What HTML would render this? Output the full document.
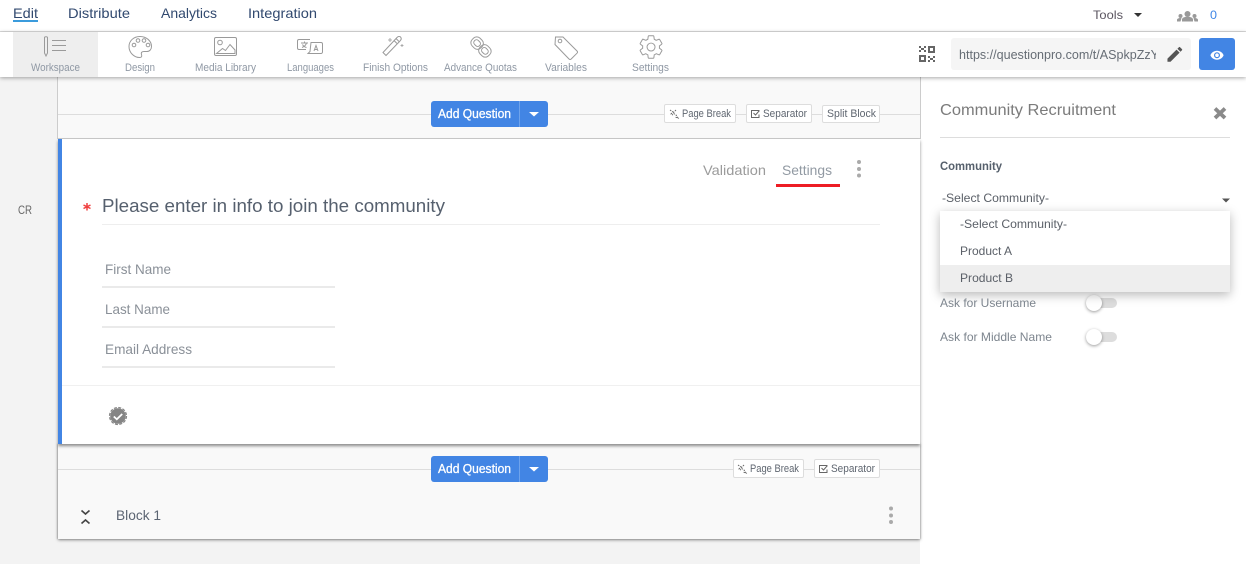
<!DOCTYPE html>
<html><head><meta charset="utf-8"><title>Community Recruitment</title>
<style>
html,body{margin:0;padding:0;width:1246px;height:564px;overflow:hidden;background:#f3f3f3;font-family:"Liberation Sans",sans-serif}
.a{position:absolute;box-sizing:border-box}
svg.o{position:absolute;left:0;top:0;z-index:50}
svg text{font-family:"Liberation Sans",sans-serif}
.chip{background:#fff;border:1px solid #ddd;border-radius:2px}
.btn{background:#4285e4;border-radius:3px}
</style></head><body>
<!-- header -->
<div class="a" style="left:0;top:0;width:1246px;height:32px;background:#fff;border-bottom:1px solid #dcdcdc"></div>
<div class="a" style="left:13px;top:20px;width:25px;height:2px;background:#3b9bdc;z-index:60"></div>
<!-- right panel -->
<div class="a" style="left:920px;top:77px;width:326px;height:487px;background:#fff"></div>
<!-- top block -->
<div class="a" style="left:57px;top:77px;width:864px;height:62px;background:#f9f9f9;border-left:1px solid #ccc;border-right:1px solid #ccc;border-bottom:1px solid #ccc"></div>
<div class="a" style="left:58px;top:114px;width:862px;height:1px;background:#ddd"></div>
<div class="a btn" style="left:431px;top:101px;width:117px;height:26px"></div>
<div class="a" style="left:519px;top:101px;width:1px;height:26px;background:#6ea3ec"></div>
<div class="a chip" style="left:664px;top:104px;width:72px;height:19px"></div>
<div class="a" style="left:736px;top:114px;width:10px;height:1px;background:#ddd"></div>
<div class="a chip" style="left:746px;top:104px;width:66px;height:19px"></div>
<div class="a chip" style="left:822px;top:105px;width:58px;height:18px"></div>
<!-- bottom block -->
<div class="a" style="left:58px;top:444px;width:862px;height:95px;background:#f9f9f9;box-shadow:0 1px 3px rgba(0,0,0,.45),1px 0 1px rgba(0,0,0,.12),-1px 0 1px rgba(0,0,0,.15)"></div>
<div class="a" style="left:58px;top:469px;width:862px;height:1px;background:#ddd"></div>
<div class="a btn" style="left:431px;top:456px;width:117px;height:26px"></div>
<div class="a" style="left:519px;top:456px;width:1px;height:26px;background:#6ea3ec"></div>
<div class="a chip" style="left:733px;top:459px;width:71px;height:19px"></div>
<div class="a chip" style="left:814px;top:459px;width:66px;height:19px"></div>
<!-- question card -->
<div class="a" style="left:58px;top:139px;width:862px;height:305px;background:#fff;border-left:4px solid #4285e4;box-shadow:0 2px 3px rgba(0,0,0,.45)"></div>
<div class="a" style="left:102px;top:224px;width:778px;height:1px;background:#eee"></div>
<div class="a" style="left:102px;top:286px;width:233px;height:2px;background:#eaeaea"></div>
<div class="a" style="left:102px;top:326px;width:233px;height:2px;background:#eaeaea"></div>
<div class="a" style="left:102px;top:366px;width:233px;height:2px;background:#eaeaea"></div>
<div class="a" style="left:62px;top:385px;width:858px;height:1px;background:#f0f0f0"></div>
<div class="a" style="left:776px;top:184px;width:64px;height:3px;background:#ed1c24"></div>
<!-- toolbar -->
<div class="a" style="left:0;top:32px;width:1246px;height:45px;background:#fff;box-shadow:0 1px 4px rgba(0,0,0,.35);z-index:5"></div>
<div class="a" style="left:13px;top:32px;width:85px;height:45px;background:#eee;z-index:6"></div>
<div class="a" style="left:951px;top:38px;width:240px;height:32px;background:#f5f5f5;border-radius:3px;z-index:6"></div>
<div class="a btn" style="left:1199px;top:38px;width:36px;height:32px;z-index:6"></div>
<!-- right section -->
<div class="a" style="left:940px;top:137px;width:290px;height:1px;background:#ddd"></div>
<div class="a" style="left:1086px;top:298px;width:31px;height:10px;background:#ddd;border-radius:5px"></div>
<div class="a" style="left:1086px;top:295px;width:16px;height:16px;background:#fff;border-radius:50%;box-shadow:0 1px 3px rgba(0,0,0,.4)"></div>
<div class="a" style="left:1086px;top:332px;width:31px;height:10px;background:#ddd;border-radius:5px"></div>
<div class="a" style="left:1086px;top:329px;width:16px;height:16px;background:#fff;border-radius:50%;box-shadow:0 1px 3px rgba(0,0,0,.4)"></div>
<div class="a" style="left:940px;top:211px;width:290px;height:81px;background:#fff;box-shadow:0 3px 10px rgba(0,0,0,.28);z-index:10"></div>
<div class="a" style="left:940px;top:265px;width:290px;height:27px;background:#eee;z-index:11"></div>

<svg class="o" width="1246" height="564" viewBox="0 0 1246 564" xmlns="http://www.w3.org/2000/svg">
<g font-size="14" fill="#31496f">
<text x="13" y="18" textLength="25" lengthAdjust="spacingAndGlyphs">Edit</text>
<text x="68" y="18" textLength="62" lengthAdjust="spacingAndGlyphs">Distribute</text>
<text x="161" y="18" textLength="56" lengthAdjust="spacingAndGlyphs">Analytics</text>
<text x="248" y="18" textLength="69" lengthAdjust="spacingAndGlyphs">Integration</text>
</g>
<text x="1093" y="19" font-size="12" fill="#5b5560" textLength="30" lengthAdjust="spacingAndGlyphs">Tools</text>
<path d="M1134 13h8l-4 4z" fill="#333"/>
<g fill="#999"><circle cx="1187.500" cy="14" r="3"/><circle cx="1180.500" cy="16" r="2"/><circle cx="1194.500" cy="16" r="2"/><path d="M1182 21.500v-2c0-2 3-2.800 5.500-2.800s5.500.8 5.500 2.800v2z"/><path d="M1177 21.500v-1.500c0-1.500 1.800-2 3.500-2l1 .3-1 3.200zM1198 21.500v-1.500c0-1.500-1.800-2-3.500-2l-1 .3 1 3.200z"/></g>
<text x="1210" y="19" font-size="12" fill="#3f86e6" textLength="7" lengthAdjust="spacingAndGlyphs">0</text>

<!-- toolbar labels -->
<g font-size="11" fill="#8f98a4">
<text x="31" y="71" textLength="49" lengthAdjust="spacingAndGlyphs">Workspace</text>
<text x="125" y="71" textLength="30" lengthAdjust="spacingAndGlyphs">Design</text>
<text x="195" y="71" textLength="61" lengthAdjust="spacingAndGlyphs">Media Library</text>
<text x="287" y="71" textLength="47" lengthAdjust="spacingAndGlyphs">Languages</text>
<text x="363" y="71" textLength="65" lengthAdjust="spacingAndGlyphs">Finish Options</text>
<text x="444" y="71" textLength="73" lengthAdjust="spacingAndGlyphs">Advance Quotas</text>
<text x="545" y="71" textLength="42" lengthAdjust="spacingAndGlyphs">Variables</text>
<text x="632" y="71" textLength="37" lengthAdjust="spacingAndGlyphs">Settings</text>
</g>
<!-- toolbar icons -->
<g fill="none" stroke="#9a9a9a" stroke-width="1">
<path d="M44.500 37.500c0-1 3-1 3 0V53l-1.500 3-1.500-3z"/><path d="M52 40.500h14M52 45.500h14M52 50.500h14"/>
<path d="M140 36.500c-6.500 0-11 4.500-11 10 0 6 5 11 10.500 11 2.500 0 2.500-1.500 2-3-.7-2 .5-3 2.500-3h3c2.500 0 4.500-2 4.500-5 0-5.500-5-10-11.500-10z"/>
<circle cx="134" cy="45" r="1.800"/><circle cx="138" cy="40.500" r="1.800"/><circle cx="144" cy="40.500" r="1.800"/><circle cx="148" cy="45" r="1.800"/>
<rect x="214.500" y="37.500" width="22" height="18" rx="1.500"/><circle cx="220" cy="42.500" r="2.300"/><path d="M216.500 53.500l6-5 3 2 4.500-6 5 5.500v3.500z"/>
<path d="M310 39.500h-11c-.8 0-1.500.6-1.500 1.500v7c0 .8.600 1.500 1.500 1.500h7"/><path d="M311 42.500h10c.8 0 1.500.6 1.500 1.500v8c0 .8-.7 1.500-1.500 1.500h-13l2-2z" fill="#fff"/><path d="M301 43h7M304.500 41.500v1.500M306.500 43c-.5 2-2 3.500-4.500 4.500M302.500 44.500c.5 1 2 2.500 4 3M314 51l2-5.500 2 5.500M314.800 49.500h2.500"/>
<path d="M386 55.500l-3-3 14-15c1-1 2.500-1.500 3.500-.5s1 2.500-.5 4z"/><path d="M394 40.500l3 3M396 38.500l3 3"/><path d="M390 38v4M388 40h4M402 44v3M400.500 45.500h3" stroke-width=".8"/>
<g transform="rotate(45 481 47)"><rect x="469.500" y="41.500" width="12" height="11" rx="4.500"/><rect x="480.500" y="41.500" width="12" height="11" rx="4.500"/><rect x="472" y="44.300" width="7" height="5.400" rx="2.500"/><rect x="483" y="44.300" width="7" height="5.400" rx="2.500"/></g>
<path d="M555.500 37h7.500l14 14c.7.700.7 1.500 0 2.200l-5.800 5.800c-.7.600-1.500.6-2.200 0l-14-14.500z"/><circle cx="560" cy="41" r="1.800"/>
<g transform="translate(637 33) scale(1.170)"><path d="M19.140,12.940c0.040-0.300,0.060-0.610,0.060-0.940c0-0.320-0.020-0.640-0.070-0.940l2.030-1.580c0.180-0.140,0.230-0.410,0.120-0.610l-1.920-3.320c-0.120-0.220-0.370-0.290-0.590-0.220l-2.390,0.960c-0.500-0.380-1.030-0.700-1.620-0.940L14.400,2.810c-0.040-0.240-0.240-0.410-0.480-0.410h-3.840c-0.240,0-0.430,0.170-0.470,0.410L9.250,5.350C8.660,5.590,8.120,5.920,7.630,6.290L5.240,5.330c-0.220-0.080-0.470,0-0.590,0.220L2.740,8.870C2.620,9.080,2.660,9.340,2.860,9.480l2.030,1.580C4.840,11.360,4.800,11.690,4.800,12s0.020,0.640,0.070,0.940l-2.030,1.580c-0.180,0.140-0.230,0.410-0.120,0.610l1.920,3.320c0.120,0.220,0.370,0.290,0.590,0.220l2.390-0.960c0.500,0.380,1.030,0.700,1.620,0.940l0.360,2.540c0.050,0.240,0.240,0.410,0.480,0.410h3.840c0.240,0,0.440-0.170,0.470-0.410l0.360-2.540c0.590-0.240,1.130-0.560,1.620-0.940l2.390,0.960c0.220,0.080,0.470,0,0.590-0.220l1.920-3.320c0.120-0.220,0.070-0.470-0.120-0.610L19.140,12.940z" stroke-width=".85"/><circle cx="12" cy="12" r="3.400" stroke-width=".85"/></g>
</g>
<!-- QR -->
<g fill="none" stroke="#666" stroke-width="2"><rect x="920" y="56" width="5" height="5"/><rect x="929" y="47" width="5" height="5"/></g>
<g fill="#666"><rect x="919" y="46" width="2" height="2"/><rect x="924" y="46" width="2" height="2"/><rect x="921" y="48" width="3" height="2"/><rect x="919" y="50" width="2" height="2"/><rect x="924" y="50" width="2" height="2"/><rect x="928" y="56" width="2" height="2"/><rect x="933" y="56" width="2" height="2"/><rect x="930" y="58" width="3" height="2"/><rect x="928" y="60" width="2" height="2"/><rect x="933" y="60" width="2" height="2"/></g>
<!-- URL -->
<svg x="951" y="38" width="205" height="32" viewBox="951 38 205 32" style="overflow:hidden"><text x="959" y="59" font-size="13" fill="#666d75" textLength="200" lengthAdjust="spacingAndGlyphs">https://questionpro.com/t/ASpkpZzY</text></svg>
<path transform="translate(1165 44.500) scale(.82)" d="M3 17.250V21h3.750L17.810 9.940l-3.750-3.750L3 17.250zM20.710 7.040a1 1 0 0 0 0-1.410l-2.340-2.340a1 1 0 0 0-1.410 0l-1.830 1.830 3.750 3.750 1.830-1.830z" fill="#555"/>
<path transform="translate(1209.800 48) scale(.6)" d="M12 4.500C7 4.500 2.730 7.610 1 12c1.730 4.390 6 7.500 11 7.500s9.270-3.110 11-7.500c-1.730-4.390-6-7.500-11-7.500zM12 17a5 5 0 1 1 0-10 5 5 0 0 1 0 10zm0-8a3 3 0 1 0 0 6 3 3 0 0 0 0-6z" fill="#fff"/>

<text x="18" y="214" font-size="12" fill="#666" textLength="14" lengthAdjust="spacingAndGlyphs">CR</text>

<!-- Add question -->
<g font-size="13" fill="#fff" stroke="#fff" stroke-width=".3">
<text x="438" y="118" textLength="73" lengthAdjust="spacingAndGlyphs">Add Question</text>
<text x="438" y="473" textLength="73" lengthAdjust="spacingAndGlyphs">Add Question</text>
</g>
<path d="M529 112h10l-5 4.500zM529 467h10l-5 4.500z" fill="#fff"/>
<!-- chips -->
<g font-size="11" fill="#5f6670">
<text x="682" y="117" textLength="49" lengthAdjust="spacingAndGlyphs">Page Break</text>
<text x="763" y="117" textLength="44" lengthAdjust="spacingAndGlyphs">Separator</text>
<text x="827" y="117" textLength="49" lengthAdjust="spacingAndGlyphs">Split Block</text>
<text x="750" y="472" textLength="49" lengthAdjust="spacingAndGlyphs">Page Break</text>
<text x="831" y="472" textLength="44" lengthAdjust="spacingAndGlyphs">Separator</text>
</g>
<g fill="none" stroke="#666" stroke-width="1">
<path d="M670 110l3 2-2 2 2 1M676 110l-3 3 3 2 2 3-3-1" stroke-dasharray="1.500 1"/>
<path d="M738 465l3 2-2 2 2 1M744 465l-3 3 3 2 2 3-3-1" stroke-dasharray="1.500 1"/>
<path d="M759 110.500h-7.500v7h7.500v-3"/><path d="M753.500 113l2 2 4-4.500"/>
<path d="M827 465.500h-7.500v7h7.500v-3"/><path d="M821.500 468l2 2 4-4.500"/>
</g>

<!-- question card text -->
<text x="703" y="175" font-size="14" fill="#9b9b9b" textLength="63" lengthAdjust="spacingAndGlyphs">Validation</text>
<text x="782" y="175" font-size="14" fill="#929aa3" textLength="50" lengthAdjust="spacingAndGlyphs">Settings</text>
<g fill="#aaa"><circle cx="859" cy="162" r="2"/><circle cx="859" cy="169" r="2"/><circle cx="859" cy="175.500" r="2"/></g>
<path d="M87 203v7.500M83.500 205l7 3.500M90.500 205l-7 3.500" stroke="#f04040" stroke-width="1.500" fill="none"/>
<text x="102" y="212" font-size="18" fill="#56606e" textLength="343" lengthAdjust="spacingAndGlyphs">Please enter in info to join the community</text>
<g font-size="14" fill="#8a9098">
<text x="105" y="274" textLength="66" lengthAdjust="spacingAndGlyphs">First Name</text>
<text x="105" y="314" textLength="65" lengthAdjust="spacingAndGlyphs">Last Name</text>
<text x="105" y="354" textLength="87" lengthAdjust="spacingAndGlyphs">Email Address</text>
</g>
<circle cx="118" cy="416" r="7.800" fill="#858585"/>
<circle cx="118" cy="416" r="8.500" fill="none" stroke="#858585" stroke-width="1.200" stroke-dasharray="3 1.450"/>
<path d="M113.800 416.500l3 2.800 5.400-5.300" fill="none" stroke="#fff" stroke-width="1.800"/>

<!-- Block 1 -->
<path d="M81.500 510.500l4 3.500 4-3.500M81.500 523.500l4-3.500 4 3.500" fill="none" stroke="#444" stroke-width="1.600"/>
<text x="116" y="520" font-size="14" fill="#5b6472" textLength="45" lengthAdjust="spacingAndGlyphs">Block 1</text>
<g fill="#aaa"><circle cx="891" cy="508.500" r="2"/><circle cx="891" cy="515.500" r="2"/><circle cx="891" cy="522" r="2"/></g>

<!-- right panel text -->
<text x="940" y="115" font-size="16" fill="#7b7b7b" textLength="176" lengthAdjust="spacingAndGlyphs">Community Recruitment</text>
<path d="M1215 108.500l10 9.500M1225 108.500l-10 9.500" stroke="#8a8a8a" stroke-width="3.800" fill="none"/>
<text x="940" y="170" font-size="12" font-weight="bold" fill="#56606c" textLength="62" lengthAdjust="spacingAndGlyphs">Community</text>
<text x="942" y="202" font-size="12" fill="#5b6068" textLength="107" lengthAdjust="spacingAndGlyphs">-Select Community-</text>
<path d="M1222 198.500h8l-4 4z" fill="#555"/>
<g font-size="12" fill="#5b6068">
<text x="960" y="228" textLength="107" lengthAdjust="spacingAndGlyphs">-Select Community-</text>
<text x="960" y="255" textLength="52" lengthAdjust="spacingAndGlyphs">Product A</text>
<text x="960" y="282" textLength="53" lengthAdjust="spacingAndGlyphs">Product B</text>
</g>
<g font-size="12" fill="#7d858e">
<text x="940" y="307" textLength="96" lengthAdjust="spacingAndGlyphs">Ask for Username</text>
<text x="940" y="341" textLength="112" lengthAdjust="spacingAndGlyphs">Ask for Middle Name</text>
</g>
</svg>
</body></html>
